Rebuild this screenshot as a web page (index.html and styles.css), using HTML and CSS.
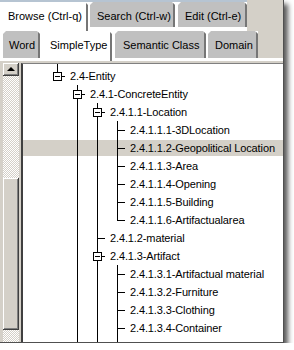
FILE: index.html
```html
<!DOCTYPE html>
<html>
<head>
<meta charset="utf-8">
<link rel="stylesheet" href="styles.css">
</head>
<body>
<div class="window">
  <div class="tabrow row1">
    <div class="tab sel w-browse">Browse (Ctrl-q)</div>
    <div class="tab w-search">Search (Ctrl-w)</div>
    <div class="tab w-edit">Edit (Ctrl-e)</div>
    <div class="fill"></div>
  </div>
  <div class="tabrow row2">
    <div class="tab w-word">Word</div>
    <div class="tab sel w-simple">SimpleType</div>
    <div class="tab w-sem">Semantic Class</div>
    <div class="tab w-dom">Domain</div>
    <div class="fill"></div>
  </div>
  <div class="content">
    <div class="scrollbar">
      <div class="btn"><span class="arrow"></span></div>
      <div class="track"></div>
      <div class="thumb"></div>
      <div class="track end"></div>
    </div>
    <div class="tree">
      <div class="row sp"><span class="c g"></span></div>
      <div class="row"><span class="c l"><span class="box"></span></span><span class="txt">2.4-Entity</span></div>
      <div class="row"><span class="c"></span><span class="c t"><span class="box"></span></span><span class="txt">2.4.1-ConcreteEntity</span></div>
      <div class="row"><span class="c"></span><span class="c g"></span><span class="c t"><span class="box"></span></span><span class="txt">2.4.1.1-Location</span></div>
      <div class="row"><span class="c"></span><span class="c g"></span><span class="c g"></span><span class="c t"></span><span class="txt">2.4.1.1.1-3DLocation</span></div>
      <div class="row sel"><span class="c"></span><span class="c g"></span><span class="c g"></span><span class="c t"></span><span class="txt">2.4.1.1.2-Geopolitical Location</span></div>
      <div class="row"><span class="c"></span><span class="c g"></span><span class="c g"></span><span class="c t"></span><span class="txt">2.4.1.1.3-Area</span></div>
      <div class="row"><span class="c"></span><span class="c g"></span><span class="c g"></span><span class="c t"></span><span class="txt">2.4.1.1.4-Opening</span></div>
      <div class="row"><span class="c"></span><span class="c g"></span><span class="c g"></span><span class="c t"></span><span class="txt">2.4.1.1.5-Building</span></div>
      <div class="row"><span class="c"></span><span class="c g"></span><span class="c g"></span><span class="c l"></span><span class="txt">2.4.1.1.6-Artifactualarea</span></div>
      <div class="row"><span class="c"></span><span class="c g"></span><span class="c t"></span><span class="txt">2.4.1.2-material</span></div>
      <div class="row"><span class="c"></span><span class="c g"></span><span class="c t"><span class="box"></span></span><span class="txt">2.4.1.3-Artifact</span></div>
      <div class="row"><span class="c"></span><span class="c g"></span><span class="c g"></span><span class="c t"></span><span class="txt">2.4.1.3.1-Artifactual material</span></div>
      <div class="row"><span class="c"></span><span class="c g"></span><span class="c g"></span><span class="c t"></span><span class="txt">2.4.1.3.2-Furniture</span></div>
      <div class="row"><span class="c"></span><span class="c g"></span><span class="c g"></span><span class="c t"></span><span class="txt">2.4.1.3.3-Clothing</span></div>
      <div class="row"><span class="c"></span><span class="c g"></span><span class="c g"></span><span class="c t"></span><span class="txt">2.4.1.3.4-Container</span></div>
      <div class="row rest"><span class="c"></span><span class="c g"></span><span class="c g"></span><span class="c g"></span></div>
    </div>
  </div>
</div>
</body>
</html>
```
FILE: styles.css
```css
html, body {
  margin: 0;
  padding: 0;
  background: #ffffff;
}

.window {
  width: 284px;
  height: 343px;
  box-sizing: border-box;
  background: #d4d0c8;
  border-right: 1px solid #505050;
  border-bottom: 1px solid #505050;
  box-shadow: 4px 4px 5px rgba(0, 0, 0, 0.65);
  display: flex;
  flex-direction: column;
  font-family: "Liberation Sans", Arial, sans-serif;
  font-size: 11px;
  color: #000;
  overflow: hidden;
}

.tabrow {
  display: flex;
  align-items: flex-start;
  flex: none;
}

.row1 {
  height: 31px;
  background: linear-gradient(#b6c4d2 0 2px, #ffffff 2px);
}

.row2 {
  height: 30px;
  padding-left: 3px;
  background: #ffffff;
}

.tab {
  box-sizing: border-box;
  flex: none;
  background: #c0c0c0;
  border-right: 2px solid #767676;
  padding-left: 7px;
  line-height: 13px;
  white-space: nowrap;
  clip-path: polygon(3px 0, calc(100% - 3px) 0, 100% 3px, 100% 100%, 0 100%, 0 3px);
}

.row1 .tab {
  margin-top: 2px;
  height: 25px;
  padding-top: 8px;
}

.row2 .tab {
  height: 27px;
  padding-top: 8px;
}

.tab.sel {
  background: #ffffff;
}

.row1 .tab.sel {
  height: 29px;
}

.row2 .tab.sel {
  height: 30px;
}

.w-browse { width: 88px; padding-left: 8px; margin-right: 2px; }
.w-search { width: 85px; margin-right: 3px; }
.w-edit { width: 69px; }
.w-word { width: 37px; padding-left: 6px; margin-right: 2px; }
.w-simple { width: 70px; padding-left: 8px; margin-right: 3px; }
.w-sem { width: 91px; padding-left: 8px; margin-right: 2px; }
.w-dom { width: 50px; }

.fill {
  flex: 1;
  align-self: stretch;
  background: #d4d0c8;
}

.row2 .fill {
  align-self: flex-start;
  height: 27px;
}

.content {
  flex: 1;
  display: flex;
  padding: 2px 0 0 3px;
  min-height: 0;
}

.scrollbar {
  width: 16px;
  flex: none;
  display: flex;
  flex-direction: column;
  margin-right: 2px;
}

.btn, .thumb {
  background: #d4d0c8;
  box-shadow: inset -1px -1px #404040, inset 1px 1px #ffffff, inset -2px -2px #808080, inset 2px 2px #d4d0c8;
  flex: none;
}

.btn {
  height: 13px;
  display: flex;
  align-items: center;
  justify-content: center;
}

.arrow {
  width: 0;
  height: 0;
  border-left: 4px solid transparent;
  border-right: 4px solid transparent;
  border-bottom: 4px solid #000;
  margin-top: -1px;
}

.track {
  height: 102px;
  flex: none;
  background: repeating-conic-gradient(#ffffff 0 25%, #d4d0c8 0 50%) 0 0 / 2px 2px;
}

.track.end {
  flex: 1;
  height: auto;
}

.thumb {
  height: 152px;
}

.tree {
  flex: 1;
  background: #ffffff;
  border-left: 2px solid #404040;
  border-top: 1px solid #808080;
  display: flex;
  flex-direction: column;
  overflow: hidden;
}

.row {
  display: flex;
  height: 18px;
  flex: none;
  padding-left: 24px;
}

.row.sp {
  height: 3px;
}

.row.rest {
  flex: 1;
  height: auto;
}

.row.sel {
  background: linear-gradient(transparent 1px, #d4d0c8 1px, #d4d0c8 17px, transparent 17px);
}

.c {
  width: 20px;
  flex: none;
  position: relative;
}

.c.g::before,
.c.t::before,
.c.l::before {
  content: "";
  position: absolute;
  left: 10px;
  top: 0;
  bottom: 0;
  width: 1px;
  background: #000;
}

.c.l::before {
  bottom: auto;
  height: 10px;
}

.c.t::after,
.c.l::after {
  content: "";
  position: absolute;
  left: 10px;
  top: 9px;
  width: 8px;
  height: 1px;
  background: #000;
}

.box {
  position: absolute;
  left: 6px;
  top: 5px;
  width: 9px;
  height: 9px;
  box-sizing: border-box;
  border: 1px solid #000;
  background: #fff;
  z-index: 1;
}

.box::after {
  content: "";
  position: absolute;
  left: 1px;
  right: 1px;
  top: 3px;
  height: 1px;
  background: #000;
}

.txt {
  margin-left: 3px;
  line-height: 18px;
  white-space: nowrap;
  letter-spacing: -0.12px;
}
```
